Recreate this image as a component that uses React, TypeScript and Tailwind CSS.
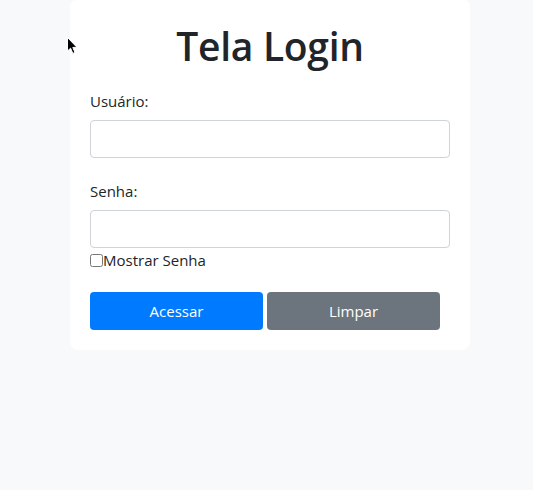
export default function App() {
  return (
    <div className="relative min-h-[490px] w-full bg-[#f8f9fa] font-['Open_Sans',sans-serif] text-[#212529]">
      {/* mouse pointer */}
      <svg className="absolute left-[67px] top-[37px]" width="12" height="18" viewBox="0 0 12 18">
        <path d="M0.5 0.5 L0.5 14 L3.6 11.2 L5.8 16.4 L8 15.5 L5.8 10.4 L10 10.4 Z" fill="#000" stroke="#fff" strokeWidth="1" />
      </svg>
      <div className="ml-[70px] w-[400px] rounded-b-lg rounded-t-md bg-white px-5 pb-5 pt-[22px]">
        <h1 className="mb-[19px] text-center text-[39px] font-semibold leading-[48px] tracking-[-0.3px]">Tela Login</h1>
        <label className="mb-[7px] block text-[15px] leading-6">Usuário:</label>
        <input type="text" className="block h-[38px] w-full rounded border border-[#ced4da] bg-white px-3" />
        <label className="mb-[7px] mt-[21px] block text-[15px] leading-6">Senha:</label>
        <input type="password" className="block h-[38px] w-full rounded border border-[#ced4da] bg-white px-3" />
        <div className="flex h-6 items-center">
          <input type="checkbox" className="m-0 h-[13px] w-[13px]" />
          <span className="text-[15px] leading-6">Mostrar Senha</span>
        </div>
        <div className="mt-5 flex gap-1">
          <button className="h-[38px] w-[173px] rounded bg-[#007bff] text-[15px] text-white">Acessar</button>
          <button className="h-[38px] w-[173px] rounded bg-[#6c757d] text-[15px] text-white">Limpar</button>
        </div>
      </div>
    </div>
  );
}
